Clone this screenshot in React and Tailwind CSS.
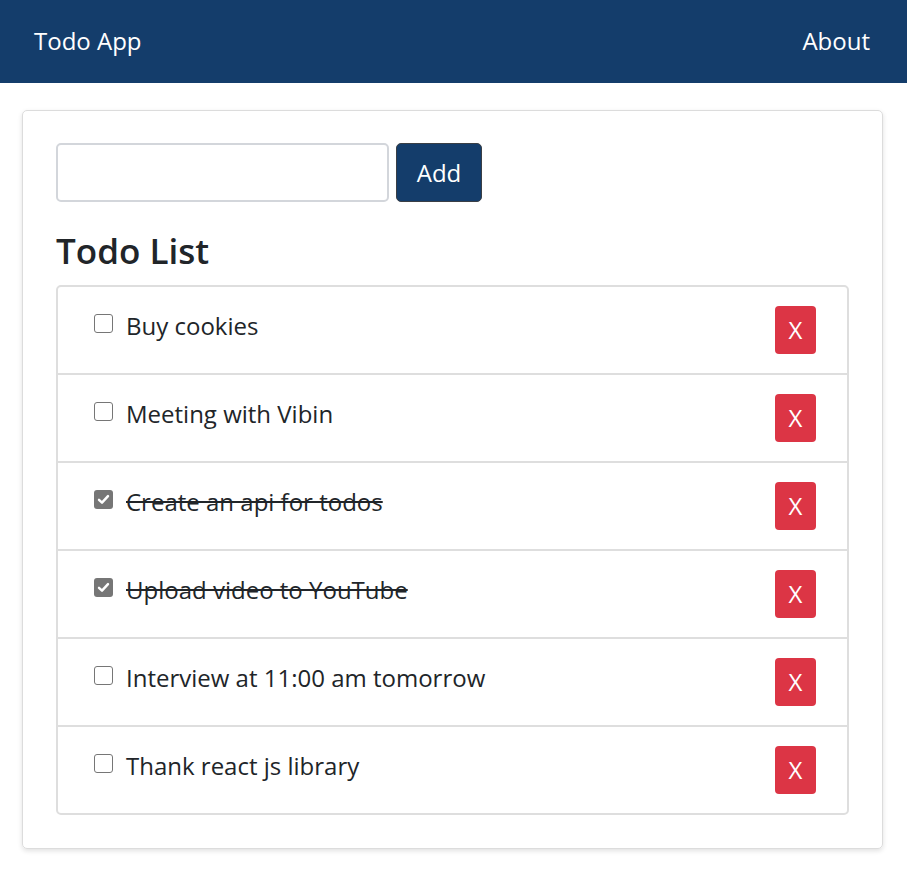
import { useState } from "react";

const initialTodos = [
  { id: 1, text: "Buy cookies", done: false },
  { id: 2, text: "Meeting with Vibin", done: false },
  { id: 3, text: "Create an api for todos", done: true },
  { id: 4, text: "Upload video to YouTube", done: true },
  { id: 5, text: "Interview at 11:00 am tomorrow", done: false },
  { id: 6, text: "Thank react js library", done: false }
];

function Check({ checked, onClick }) {
  return (
    <button
      type="button"
      onClick={onClick}
      className={
        checked
          ? "mt-[8px] flex h-[19px] w-[19px] shrink-0 items-center justify-center rounded-[3px] bg-[#767676]"
          : "mt-[8px] h-[19px] w-[19px] shrink-0 rounded-[3px] border border-[#767676] bg-white"
      }
    >
      {checked && (
        <svg viewBox="0 0 16 16" className="h-[15px] w-[15px]">
          <path d="M3.2 8.4 6.4 11.4 12.8 4.4" fill="none" stroke="white" strokeWidth="2.6" strokeLinecap="round" strokeLinejoin="round" />
        </svg>
      )}
    </button>
  );
}

export default function App() {
  const [todos, setTodos] = useState(initialTodos);
  const [text, setText] = useState("");

  const addTodo = () => {
    if (!text.trim()) return;
    setTodos([...todos, { id: Date.now(), text, done: false }]);
    setText("");
  };

  return (
    <div className="min-h-screen bg-white font-['Open_Sans',sans-serif] text-[#212529]">
      <nav className="flex h-[83px] items-center justify-between bg-[#143d6b] pb-[2px] pl-[34px] pr-[37px] text-[24px] text-white">
        <span>Todo App</span>
        <span>About</span>
      </nav>

      <div className="pl-[22px] pr-[24px] pt-[27px]">
        <div className="rounded-[5px] border border-[#dcdcdc] px-[33px] pb-[33px] pt-[32px] shadow-[0_2px_5px_rgba(0,0,0,0.12)]">
          <div className="flex gap-[7px]">
            <input
              value={text}
              onChange={(e) => setText(e.target.value)}
              className="h-[59px] w-[333px] rounded-[5px] border-2 border-[#d3d6db] px-3 text-[24px] outline-none"
            />
            <button
              type="button"
              onClick={addTodo}
              className="h-[59px] w-[86px] rounded-[5px] border border-[#3a3f45] bg-[#143d6b] text-[24px] text-white"
            >
              Add
            </button>
          </div>

          <h3 className="mb-[11px] mt-[26px] text-[35px] font-semibold leading-[46px]">Todo List</h3>

          <ul className="rounded-[5px] border-2 border-[#dedede]">
            {todos.map((todo) => (
              <li
                key={todo.id}
                className="flex items-start border-b-2 border-[#dedede] pb-[19px] pl-[36px] pr-[31px] pt-[19px] last:border-b-0"
              >
                <Check
                  checked={todo.done}
                  onClick={() =>
                    setTodos(todos.map((t) => (t.id === todo.id ? { ...t, done: !t.done } : t)))
                  }
                />
                <span className={`ml-[13px] flex-1 pt-[2px] text-[24px] leading-[36px] ${todo.done ? "line-through" : ""}`}>
                  {todo.text}
                </span>
                <button
                  type="button"
                  onClick={() => setTodos(todos.filter((t) => t.id !== todo.id))}
                  className="h-[48px] w-[41px] rounded-[4px] bg-[#dc3545] text-[24px] text-white"
                >
                  X
                </button>
              </li>
            ))}
          </ul>
        </div>
      </div>
    </div>
  );
}
